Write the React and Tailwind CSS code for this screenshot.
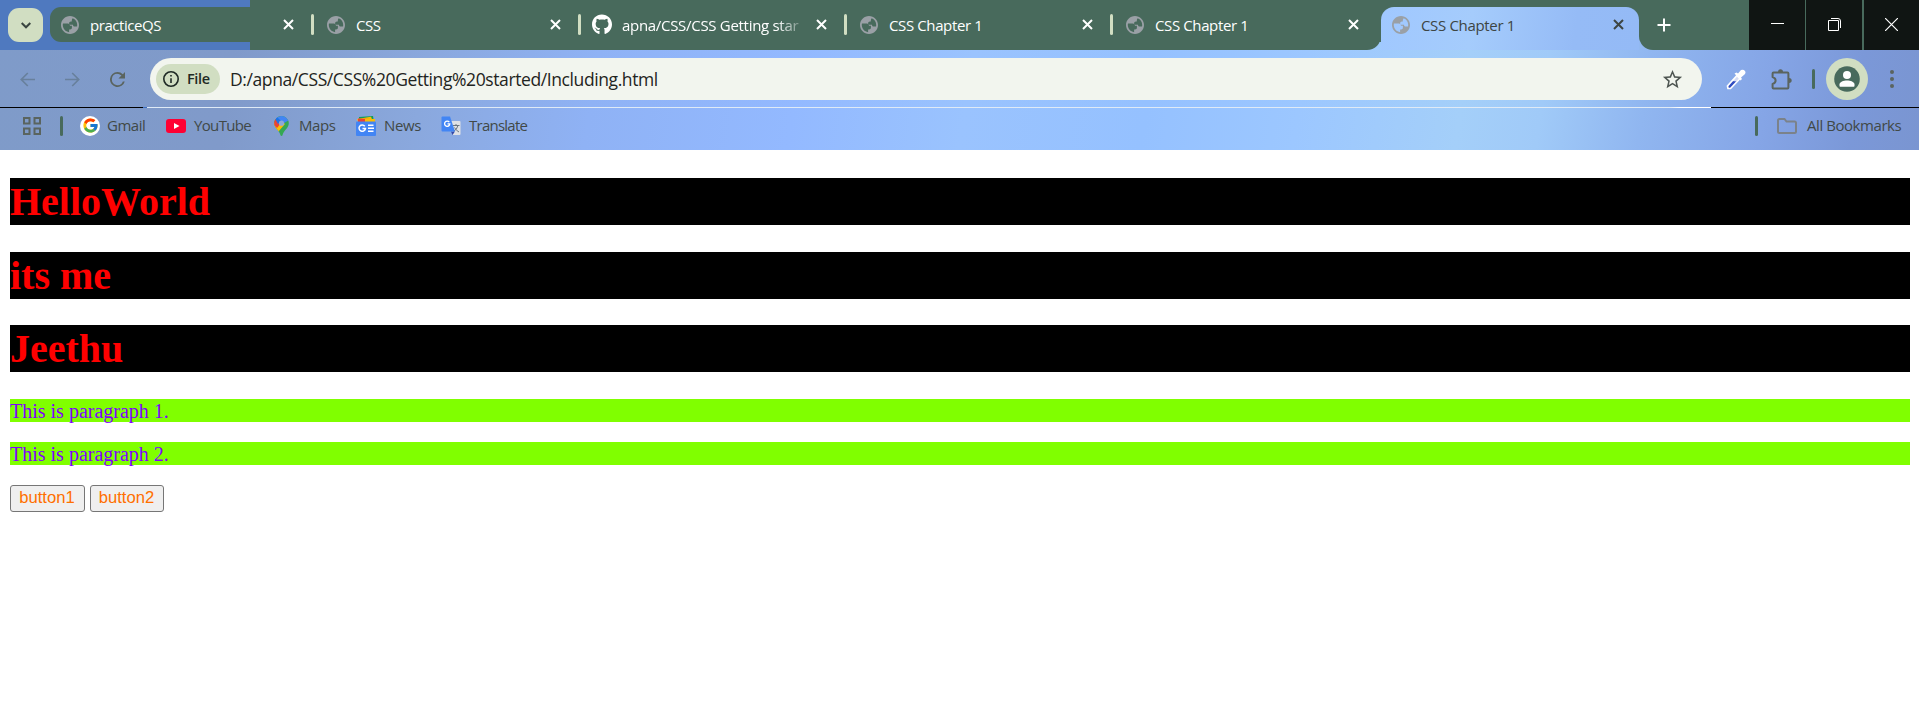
import { MdStarBorder } from "react-icons/md";
import { FaGithub } from "react-icons/fa";
import { FcGoogle } from "react-icons/fc";

const ui = "font-['Open_Sans','Noto_Sans',sans-serif]";

const Globe = () => (
  <svg viewBox="2 2 20 20" className="h-[18px] w-[18px] shrink-0 fill-[#9aa0a6]">
    <path d="M12 2C6.48 2 2 6.48 2 12s4.48 10 10 10 10-4.48 10-10S17.52 2 12 2zm-1 17.93c-3.95-.49-7-3.85-7-7.93 0-.62.08-1.21.21-1.79h5.3c1.6 0 2.4 1.1 2.4 2.5h2.2v2.4c0 1.1-.9 1.9-2 1.9h-1.1v2.93zM15 4.6c2.93 1.19 5 4.06 5 7.41 0 .6-.1 1.1-.2 1.6h-2.6c-1.2 0-1.9-.8-1.9-2h-2.9c-1 0-1.4-.7-1.4-1.500 0-1.2.8-2.100 2-2.100h1V7c0-1 .4-1.900 1-2.400z" />
  </svg>
);

const Cross = ({ className = "text-white" }) => (
  <svg viewBox="0 0 11 11" className={`h-[11px] w-[11px] shrink-0 ${className}`} stroke="currentColor" strokeWidth="2">
    <path d="M1 1 10 10M10 1 1 10" />
  </svg>
);

const tabs = [
  { title: "practiceQS", box: "w-[264px] pl-[11px] rounded-l-[11px]", text: "ml-[11px] tracking-[-0.45px]", sep: true },
  { title: "CSS", box: "w-[267px] pl-[13px]", text: "ml-[11px] tracking-[-0.4px]", sep: true },
  { title: "apna/CSS/CSS Getting star", box: "w-[266px] pl-[11px]", text: "ml-[10px] tracking-[-0.3px]", github: true, sep: true },
  { title: "CSS Chapter 1", box: "w-[266px] pl-[13px]", text: "ml-[11px] tracking-[-0.38px]", sep: true },
  { title: "CSS Chapter 1", box: "w-[268px] pl-[13px]", text: "ml-[11px] tracking-[-0.38px]" },
];

function TabStrip() {
  return (
    <div className={`flex h-[50px] text-[15px] text-white ${ui}`}>
      <div className="flex w-[1381px] rounded-br-[14px] bg-[linear-gradient(90deg,#4f79bf_250px,#486a5c_250px)] pt-[7px] pl-2">
        <div className="mt-px mr-[7px] flex h-[34px] w-[35px] items-center justify-center rounded-[11px] bg-[#d1dec2]">
          <svg viewBox="0 0 10 7" className="h-[7px] w-[10px]" fill="none" stroke="#3a4540" strokeWidth="2"><path d="m.7 1 4.300 4.300L9.300 1" /></svg>
        </div>
        {tabs.map((t, i) => (
          <div key={i} className={`flex h-[35px] items-center bg-[#486a5c] ${t.box}`}>
            {t.github ? <FaGithub className="h-[21px] w-5 shrink-0" /> : <Globe />}
            <span className={`min-w-0 flex-1 whitespace-nowrap pt-px leading-[22px] ${t.text} ${t.github ? "mr-[10px] [mask-image:linear-gradient(90deg,#000_155px,transparent_186px)]" : ""}`}>{t.title}</span>
            <Cross />
            {t.sep ? <span className="ml-[17px] h-[21px] w-[3px] rounded-full bg-[#d1dec2]" /> : <span className="w-[22px]" />}
          </div>
        ))}
      </div>
      <div className="w-[258px] bg-[#486a5c] pt-[7px]">
        <div className="flex h-[43px] items-start rounded-t-[13px] bg-[linear-gradient(97deg,#a0c8ff,#a5ccfc_35%,#95bbf6_75%,#94baf6)] pl-[11px] pr-[15px] text-[#3d4543]">
          <div className="flex h-[35px] flex-1 items-center">
            <Globe />
            <span className="ml-[11px] flex-1 pt-px tracking-[-0.33px]">CSS Chapter 1</span>
            <Cross className="text-[#3d4543]" />
          </div>
        </div>
      </div>
      <div className="flex w-[110px] rounded-bl-[14px] bg-[#486a5c] pt-[18px] pl-[18px]">
        <svg viewBox="0 0 14 14" className="h-[14px] w-[14px]" stroke="#fff" strokeWidth="2"><path d="M7 .5v13M.5 7h13" /></svg>
      </div>
      <div className="flex flex-1 bg-[#486a5c]">
        <div className="flex w-14 justify-center bg-[#101513] pt-[23px]"><span className="h-px w-[13px] bg-white" /></div>
        <div className="ml-px flex w-14 justify-center bg-[#101513] pt-[18px]">
          <svg viewBox="0 0 13 13" className="h-[13px] w-[13px]" fill="none" stroke="#fff"><path d="M.5 2.500h10v10H.5zM3 .5h7a2.500 2.500 0 0 1 2.500 2.500v7" /></svg>
        </div>
        <div className="ml-0.5 flex flex-1 justify-center bg-[#101513] pt-[18px]">
          <svg viewBox="0 0 13 13" className="h-[13px] w-[13px]" stroke="#fff" strokeWidth="1.200"><path d="M0 0 13 13M13 0 0 13" /></svg>
        </div>
      </div>
    </div>
  );
}

function Toolbar() {
  return (
    <div className={`flex h-[57px] items-start pt-2 ${ui}`}>
      <div className="flex h-[42px] w-[150px] items-center text-[#5a645f]">
        <svg viewBox="0 0 15 15" className="ml-5 h-[15px] w-[15px]" fill="none" stroke="#68809c" strokeWidth="1.700"><path d="M15 7.500H1.500M7.800 1 1.300 7.500l6.500 6.500" /></svg>
        <svg viewBox="0 0 15 15" className="ml-[30px] h-[15px] w-[15px]" fill="none" stroke="#68809c" strokeWidth="1.700"><path d="M0 7.500h13.500M7.200 1l6.500 6.500L7.200 14" /></svg>
        <svg viewBox="4 4 16 16" className="ml-[30px] h-[15px] w-[15px]" fill="currentColor"><path d="M17.650 6.350A7.960 7.960 0 0 0 12 4a8 8 0 1 0 7.730 10h-2.080A6 6 0 1 1 12 6c1.660 0 3.140.69 4.220 1.780L13 11h7V4z" /></svg>
      </div>
      <div className="flex h-[42px] w-[1552px] items-center rounded-full bg-[#f2f5ee] pl-1.5">
        <div className="flex h-[30px] w-16 items-center rounded-full bg-[#d1dec2] pl-[7px] text-[#1f2a25]">
          <svg viewBox="2 2 20 20" className="h-4 w-4" fill="currentColor"><path d="M11 7h2v2h-2zm0 4h2v6h-2zm1-9a10 10 0 1 0 0 20 10 10 0 0 0 0-20zm0 18a8 8 0 1 1 0-16 8 8 0 0 1 0 16z" /></svg>
          <span className="ml-2 text-[14.500px] font-semibold tracking-[-0.35px]">File</span>
        </div>
        <span className="ml-[10px] flex-1 text-[17.500px] tracking-[-0.4px] text-[#1f2421]">D:/apna/CSS/CSS%20Getting%20started/Including.html</span>
        <MdStarBorder className="mr-[18px] h-[23px] w-[23px] text-[#4e5551]" />
      </div>
      <div className="flex h-[42px] flex-1 items-center">
        <svg viewBox="0 0 20 21" className="ml-6 h-[21px] w-5"><path d="M2 19.500 1.500 17 11 6.500l3 3L4.500 19.500z" fill="#2f4bc0" stroke="#fff" strokeWidth="1.700" /><path d="m8.500 4.500 2-1 1.500 1 3-3.500q2.500-1 4 1 1.200 2-.5 3.500L15 8.500l1 1.500-1.500 1.500z" fill="#fff" /><path d="m6 12 5-5 2.500 2.500-3 3z" fill="#fff" opacity=".8" /></svg>
        <svg viewBox="0 0 21 21" className="ml-[25px] h-[21px] w-[21px]" fill="none" stroke="#5a645f" strokeWidth="2"><path d="M2.500 3.500h14q.9 0 .9.900v14.200q0 .9-.9.900h-14q-.9 0-.9-.9v-3.700Q4.600 14.100 4.600 11.500T1.600 8.100V4.400q0-.9.900-.9z" strokeLinejoin="round" /><path d="M7 3a2.500 2.800 0 0 1 5 0zM18 9a2.700 2.500 0 0 1 0 5z" fill="#5a645f" stroke="none" /></svg>
        <span className="ml-5 h-5 w-[3px] rounded-full bg-[#486a5c]" />
        <div className="ml-[11px] flex h-[42px] w-[42px] items-center justify-center rounded-full bg-[#d1dec2]">
          <svg viewBox="0 0 26 26" className="h-[26px] w-[26px]"><circle cx="13" cy="13" r="12.800" fill="#486a5c" /><circle cx="13" cy="9" r="4" fill="#fff" /><path d="M5.500 20v-1.500c0-2.500 4-4 7.500-4s7.500 1.500 7.500 4V20q0 .7-.7.7H6.200q-.7 0-.7-.7z" fill="#fff" /></svg>
        </div>
        <svg viewBox="0 0 4 18" className="ml-[22px] h-[18px] w-1" fill="#5a645f"><circle cx="2" cy="2" r="2" /><circle cx="2" cy="9" r="2" /><circle cx="2" cy="16" r="2" /></svg>
      </div>
    </div>
  );
}

const MapsPin = () => (
  <svg viewBox="0 0 15 20" className="h-5 w-[15px]">
    <defs><clipPath id="pin"><path d="M7.500 0A7.300 7.300 0 0 1 14.800 7.300c0 5-5.300 7-6.300 12q-.3.700-1 .700t-1-.7C5.500 14.300.2 12.300.2 7.300A7.300 7.300 0 0 1 7.500 0z" /></clipPath></defs>
    <g clipPath="url(#pin)"><path d="M0 0h15v20H0z" fill="#34a853" /><path d="M0 14V7l7-2 4 3-7 8z" fill="#fbbc04" /><path d="M0 9V3h5l2 4-4 5z" fill="#ea4335" /><path d="M1 2 6 0h9v4L7 9z" fill="#4285f4" /><path d="M1 2.500 3 1l4 4-3 3z" fill="#1a73e8" /></g>
    <circle cx="7.500" cy="7.200" r="2.600" fill="#8fa9d6" />
  </svg>
);

const NewsIcon = () => (
  <svg viewBox="0 0 20 20" className="h-5 w-5">
    <path d="M3 1 17 0l1 6H3z" fill="#0f9d58" /><path d="M1 3 15 .8 17 6H2z" fill="#fbbc04" /><path d="M2 2.500 15 3l3.500 3H2z" fill="#ea4335" />
    <path d="M9 3h10v4H9z" fill="#fbbc04" /><rect y="5.500" width="20" height="14.500" rx="1" fill="#4285f4" />
    <path d="M8.800 10.200A3.200 3.200 0 1 0 9.400 12.600H6.500M12 9.300h5.500M12 12.300h6M12 15.300h5.500" fill="none" stroke="#fff" strokeWidth="1.500" />
  </svg>
);

const TranslateIcon = () => (
  <svg viewBox="0 0 20 20" className="h-5 w-5">
    <path d="M9 5h9.500q1 0 1 1v12q0 1-1 1H12z" fill="#dfe1e5" />
    <path d="M12 9.500h6.500M15 8v1.500M17 9.500q-1 4-4.500 6M13.500 11.500q1.500 3 4.500 4.500" fill="none" stroke="#6b7680" />
    <path d="M10 15.500h4L11.500 19z" fill="#3347a8" /><path d="M1.500.5h7.500L14 15.500H1.500q-1 0-1-1v-13q0-1 1-1z" fill="#4285f4" />
    <path d="M8.300 6.200a2.600 2.600 0 1 0 .5 1.700H6.500" fill="none" stroke="#fff" strokeWidth="1.300" />
  </svg>
);

function Bookmarks() {
  return (
    <div className={`flex h-[42px] items-center pb-[7px] pl-[23px] pr-[17px] text-[15px] text-[#414947] ${ui}`}>
      <svg viewBox="0 0 18 18" className="h-[18px] w-[18px]" fill="none" stroke="#5a645f" strokeWidth="2"><path d="M1 1h5.500v5.500H1zM11.500 1H17v5.500h-5.500zM1 11.500h5.500V17H1zM11.500 11.500H17V17h-5.500z" /></svg>
      <span className="ml-[19px] h-5 w-[3px] rounded-full bg-[#486a5c]" />
      <span className="ml-[17px] flex h-5 w-5 items-center justify-center rounded-full bg-white"><FcGoogle className="h-[17px] w-[17px]" /></span>
      <span className="ml-[7px] w-[59px] whitespace-nowrap tracking-[-0.5px]">Gmail</span>
      <svg viewBox="0 0 20 14" className="h-[14px] w-5"><rect width="20" height="14" rx="3" fill="#f03" /><path d="m8 4 5.500 3L8 10z" fill="#fff" /></svg>
      <span className="ml-2 w-[80px] whitespace-nowrap tracking-[-0.65px]">YouTube</span>
      <MapsPin />
      <span className="ml-[10px] w-[57px] whitespace-nowrap tracking-[-0.45px]">Maps</span>
      <NewsIcon />
      <span className="ml-2 w-[57px] whitespace-nowrap tracking-[-0.4px]">News</span>
      <TranslateIcon />
      <span className="ml-2 flex-1 whitespace-nowrap tracking-[-0.75px]">Translate</span>
      <span className="h-5 w-[3px] rounded-full bg-[#486a5c]" />
      <svg viewBox="0 0 20 16" className="ml-[19px] h-4 w-5" fill="none" stroke="#7b828a" strokeWidth="2"><path d="M2.500 1h5l2 2.500h8q1.500 0 1.500 1.500v8.500q0 1.500-1.500 1.500h-15Q1 15 1 13.500v-11Q1 1 2.500 1z" /></svg>
      <span className="ml-[10px] w-[95px] whitespace-nowrap tracking-[-0.44px]">All Bookmarks</span>
    </div>
  );
}

export default function App() {
  return (
    <div className="min-h-[725px] bg-white">
      <header className="bg-[linear-gradient(99deg,#7f9bc9_0,#809aca_240px,#8aa8dd_430px,#8fb2f5_600px,#93b9ff_800px,#9ac3fe_970px,#95c1ff_1150px,#9cc7ff_1300px,#a4cff9_1460px,#a0caf8_1540px,#90b6f0_1640px,#85a5e6_1760px,#7b98d8_1850px,#7a95d1_1919px)]">
        <TabStrip />
        <Toolbar />
        <div className="h-px bg-[linear-gradient(90deg,#000_143px,#3c6fc4_143px,#3c6fc4_147px,#dfeaf6_147px,#dfeaf6_1670px,#fff_1680px,#fff_1711px,#000_1711px)]" />
        <Bookmarks />
      </header>
      <main className="px-[10px] pr-[9px] pt-7 font-['Liberation_Serif',serif]">
        <h1 className="h-[47px] bg-black text-[40px] leading-[47px] font-bold text-[red]">HelloWorld</h1>
        <h1 className="mt-[27px] h-[47px] bg-black text-[40px] leading-[47px] font-bold text-[red]">its me</h1>
        <h1 className="mt-[26px] h-[47px] bg-black text-[40px] leading-[47px] font-bold text-[red]">Jeethu</h1>
        <p className="mt-[27px] h-[23px] bg-[#80ff00] text-[20px] leading-[24px] text-[#8000ff]">This is paragraph 1.</p>
        <p className="mt-5 h-[23px] bg-[#80ff00] text-[20px] leading-[24px] text-[#8000ff]">This is paragraph 2.</p>
        <div className="mt-5 flex gap-[5px] font-['Liberation_Sans',sans-serif] text-[16.667px]">
          <button className="flex h-[27px] w-[75px] justify-center rounded-[3px] border border-[#767676] bg-[#efefef] pr-px leading-[23px] text-[#ff6f00]">button1</button>
          <button className="flex h-[27px] w-[74px] justify-center rounded-[3px] border border-[#767676] bg-[#efefef] pr-px leading-[23px] text-[#ff6f00]">button2</button>
        </div>
      </main>
    </div>
  );
}
